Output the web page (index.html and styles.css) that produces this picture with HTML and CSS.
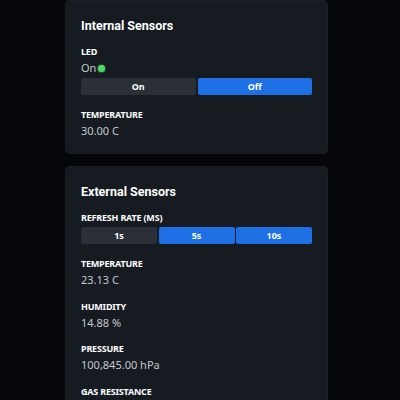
FILE: index.html
```html
<!DOCTYPE html>
<html>
<head>
<meta charset="utf-8">
<link rel="stylesheet" href="styles.css">
</head>
<body>
<div class="page">
  <section class="card">
    <h2 class="title">Internal Sensors</h2>
    <div class="label">LED</div>
    <div class="status">On<span class="dot"></span></div>
    <div class="btns two">
      <button class="btn">On</button>
      <button class="btn active">Off</button>
    </div>
    <div class="field">
      <div class="label">TEMPERATURE</div>
      <div class="value">30.00 C</div>
    </div>
  </section>
  <section class="card">
    <h2 class="title">External Sensors</h2>
    <div class="label">REFRESH RATE (MS)</div>
    <div class="btns three">
      <button class="btn">1s</button>
      <button class="btn active">5s</button>
      <button class="btn active">10s</button>
    </div>
    <div class="field">
      <div class="label">TEMPERATURE</div>
      <div class="value">23.13 C</div>
    </div>
    <div class="field">
      <div class="label">HUMIDITY</div>
      <div class="value">14.88 %</div>
    </div>
    <div class="field">
      <div class="label">PRESSURE</div>
      <div class="value">100,845.00 hPa</div>
    </div>
    <div class="field">
      <div class="label">GAS RESISTANCE</div>
      <div class="value">0.00 Ohms</div>
    </div>
  </section>
</div>
</body>
</html>
```

FILE: styles.css
```css
html, body {
  margin: 0;
  padding: 0;
  background: #05070b;
  height: 100%;
  overflow: hidden;
}
body {
  font-family: "Noto Sans", "Open Sans", sans-serif;
  color: #ffffff;
}
.page {
  width: 261px;
  margin-left: 66px;
  padding-top: 1px;
  display: flex;
  flex-direction: column;
  gap: 14px;
}
.card {
  background: #161a21;
  border-radius: 4px;
  padding: 15px;
  box-shadow: 0 0 0 1px #1a1e26;
}
.title {
  margin: 1px 0 11px 0;
  font-family: Roboto, "Noto Sans", sans-serif;
  font-size: 12.5px;
  line-height: 18px;
  font-weight: 700;
  color: #ffffff;
}
.label {
  font-size: 9px;
  line-height: 12px;
  font-weight: 700;
  color: #ffffff;
  letter-spacing: -0.2px;
}
.status {
  margin-top: 3px;
  font-size: 11px;
  line-height: 14px;
  color: #c4c8ce;
  display: flex;
  align-items: center;
}
.dot {
  width: 7px;
  height: 7px;
  border-radius: 50%;
  background: #4cd964;
  margin-left: 2px;
  box-shadow: 0 0 2px #4cd964;
}
.btns {
  margin-top: 3px;
  display: grid;
  gap: 2px;
}
.btns.two { grid-template-columns: 1fr 1fr; }
.btns.three { grid-template-columns: 1fr 1fr 1fr; gap: 1.5px; }
.btn {
  height: 17px;
  border: none;
  border-radius: 2px;
  padding: 0;
  background: #2a2f38;
  color: #ffffff;
  font-family: inherit;
  font-size: 9px;
  font-weight: 700;
}
.btn.active {
  background: #1f6fe5;
}
.field {
  margin-top: 14px;
}
.field + .field {
  margin-top: 13.5px;
}
.value {
  margin-top: 3px;
  font-size: 11px;
  line-height: 14px;
  color: #c4c8ce;
}
```
